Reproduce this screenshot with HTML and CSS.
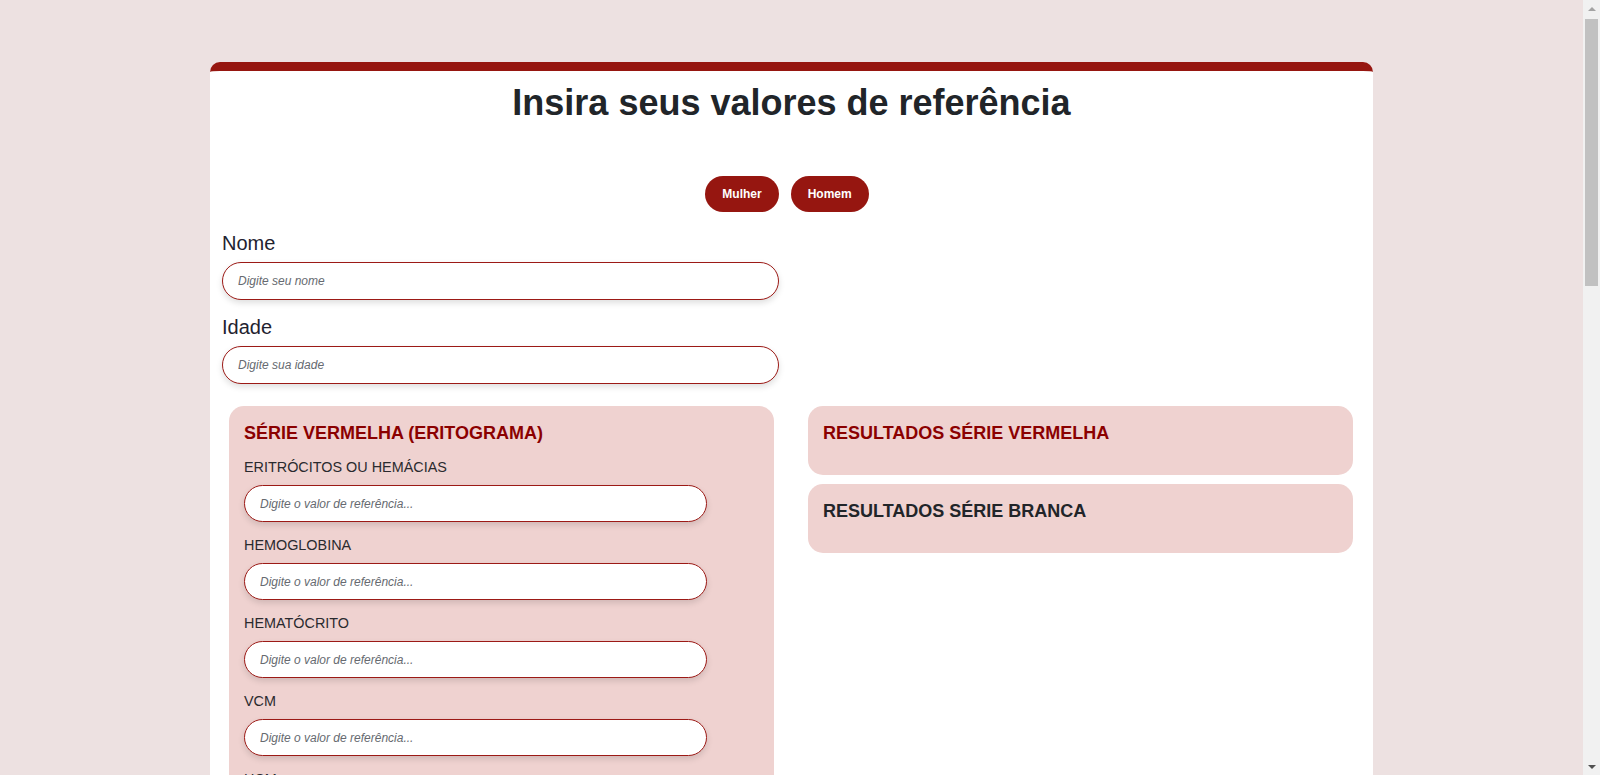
FILE: index.html
```html
<!DOCTYPE html>
<html lang="pt-BR">
<head>
<meta charset="utf-8">
<title>Valores de referência</title>
<link rel="stylesheet" href="styles.css">
</head>
<body>
<main class="card">
  <h1 class="title">Insira seus valores de referência</h1>

  <div class="sex-toggle">
    <button class="sex-btn" type="button">Mulher</button>
    <button class="sex-btn" type="button">Homem</button>
  </div>

  <section class="identity">
    <label class="id-label" for="nome">Nome</label>
    <input class="pill-input id-input" id="nome" type="text" placeholder="Digite seu nome">
    <label class="id-label" for="idade">Idade</label>
    <input class="pill-input id-input" id="idade" type="text" placeholder="Digite sua idade">
  </section>

  <div class="grid">
    <div class="col">
      <section class="panel">
        <h2 class="panel-title red">SÉRIE VERMELHA (ERITOGRAMA)</h2>
        <label class="field-label">ERITRÓCITOS OU HEMÁCIAS</label>
        <input class="pill-input field-input" type="text" placeholder="Digite o valor de referência...">
        <label class="field-label">HEMOGLOBINA</label>
        <input class="pill-input field-input" type="text" placeholder="Digite o valor de referência...">
        <label class="field-label">HEMATÓCRITO</label>
        <input class="pill-input field-input" type="text" placeholder="Digite o valor de referência...">
        <label class="field-label">VCM</label>
        <input class="pill-input field-input" type="text" placeholder="Digite o valor de referência...">
        <label class="field-label">HCM</label>
        <input class="pill-input field-input" type="text" placeholder="Digite o valor de referência...">
        <label class="field-label">CHCM</label>
        <input class="pill-input field-input" type="text" placeholder="Digite o valor de referência...">
        <label class="field-label">RDW</label>
        <input class="pill-input field-input" type="text" placeholder="Digite o valor de referência...">
      </section>

      <section class="panel">
        <h2 class="panel-title dark">SÉRIE BRANCA (LEUCOGRAMA)</h2>
        <label class="field-label">LEUCÓCITOS</label>
        <input class="pill-input field-input" type="text" placeholder="Digite o valor de referência...">
        <label class="field-label">NEUTRÓFILOS</label>
        <input class="pill-input field-input" type="text" placeholder="Digite o valor de referência...">
        <label class="field-label">BASTONETES</label>
        <input class="pill-input field-input" type="text" placeholder="Digite o valor de referência...">
        <label class="field-label">SEGMENTADOS</label>
        <input class="pill-input field-input" type="text" placeholder="Digite o valor de referência...">
        <label class="field-label">EOSINÓFILOS</label>
        <input class="pill-input field-input" type="text" placeholder="Digite o valor de referência...">
        <label class="field-label">BASÓFILOS</label>
        <input class="pill-input field-input" type="text" placeholder="Digite o valor de referência...">
        <label class="field-label">LINFÓCITOS</label>
        <input class="pill-input field-input" type="text" placeholder="Digite o valor de referência...">
        <label class="field-label">MONÓCITOS</label>
        <input class="pill-input field-input" type="text" placeholder="Digite o valor de referência...">
        <label class="field-label">PLAQUETAS</label>
        <input class="pill-input field-input" type="text" placeholder="Digite o valor de referência...">
      </section>
    </div>

    <div class="col">
      <section class="panel result">
        <h2 class="panel-title red">RESULTADOS SÉRIE VERMELHA</h2>
      </section>
      <section class="panel result">
        <h2 class="panel-title dark">RESULTADOS SÉRIE BRANCA</h2>
      </section>
    </div>
  </div>
</main>

<div class="scrollbar" aria-hidden="true">
  <span class="sb-arrow sb-up"></span>
  <span class="sb-track"><span class="sb-thumb"></span></span>
  <span class="sb-arrow sb-down"></span>
</div>
</body>
</html>
```

FILE: styles.css
```css
html, body {
  margin: 0;
  padding: 0;
}

body {
  background: #ede1e1;
  font-family: "Liberation Sans", Arial, sans-serif;
  color: #212529;
  padding: 62px 17px 60px 0;
}

.card {
  width: 1163px;
  margin: 0 auto;
  background: #ffffff;
  border-top: 9px solid #961610;
  border-radius: 10px 10px 0 0;
  padding-bottom: 40px;
}

.title {
  margin: 10px 0 0;
  font-size: 36px;
  line-height: 44px;
  font-weight: 700;
  text-align: center;
  color: #212529;
}

.sex-toggle {
  display: flex;
  justify-content: center;
  gap: 12px;
  padding-right: 9px;
  margin-top: 51px;
}

.sex-btn {
  height: 36px;
  padding: 0 17px;
  border: none;
  border-radius: 18px;
  background: #961610;
  color: #ffffff;
  font-family: "Liberation Sans", Arial, sans-serif;
  font-size: 12px;
  font-weight: 700;
  cursor: pointer;
}

.identity {
  display: flex;
  flex-direction: column;
  align-items: flex-start;
  padding: 0 12px;
  margin-top: 19px;
}

.id-label {
  font-size: 20px;
  line-height: 24px;
  margin-bottom: 7px;
  color: #1f2230;
}

.pill-input {
  box-sizing: border-box;
  border: 1px solid #9c1a16;
  background: #ffffff;
  font-family: "Liberation Sans", Arial, sans-serif;
  font-size: 12px;
  font-style: italic;
  color: #333;
  outline: none;
  box-shadow: 0 3px 6px rgba(0, 0, 0, 0.13);
}

.pill-input::placeholder {
  color: #666a70;
  font-style: italic;
}

.id-input {
  width: 557px;
  height: 38px;
  border-radius: 19px;
  padding: 0 15px;
  margin-bottom: 15px;
}

.id-input:last-child {
  margin-bottom: 0;
}

.grid {
  display: grid;
  grid-template-columns: 545px 545px;
  gap: 34px;
  padding: 0 20px 0 19px;
  margin-top: 22px;
}

.col {
  display: flex;
  flex-direction: column;
  gap: 9px;
}

.panel {
  background: #efd2d0;
  border-radius: 15px;
  padding: 16px 15px 16px;
  display: flex;
  flex-direction: column;
  align-items: flex-start;
}

.panel-title {
  margin: 0 0 15px;
  font-size: 18px;
  line-height: 22px;
  font-weight: 700;
}

.panel-title.red {
  color: #8b0000;
}

.panel-title.dark {
  color: #212529;
}

.field-label {
  font-size: 14.4px;
  line-height: 17px;
  margin-bottom: 9px;
  color: #2a2a2e;
}

.field-input {
  width: 463px;
  height: 37px;
  border-radius: 18.5px;
  padding: 0 15px;
  margin-bottom: 15px;
}

/* window scrollbar (overlay at the right edge of the viewport) */
.scrollbar {
  position: fixed;
  top: 0;
  right: 0;
  width: 17px;
  height: 100vh;
  background: #f1f1f1;
  display: flex;
  flex-direction: column;
  align-items: center;
}

.sb-arrow {
  flex: 0 0 17px;
  width: 17px;
  display: flex;
  align-items: center;
  justify-content: center;
}

.sb-up::before {
  content: "";
  border-left: 4px solid transparent;
  border-right: 4px solid transparent;
  border-bottom: 4px solid #a3a3a3;
}

.sb-down::before {
  content: "";
  border-left: 4px solid transparent;
  border-right: 4px solid transparent;
  border-top: 4px solid #505050;
}

.sb-track {
  flex: 1;
  width: 17px;
  display: flex;
  justify-content: center;
}

.sb-thumb {
  width: 13px;
  height: 267px;
  margin-top: 2px;
  background: #c1c1c1;
}
```
